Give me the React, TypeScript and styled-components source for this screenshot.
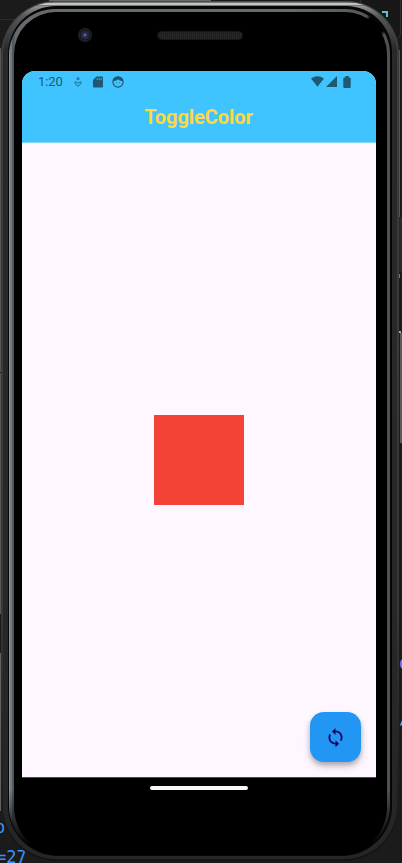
import React from "react";
import styled, { createGlobalStyle } from "styled-components";

const GlobalStyle = createGlobalStyle`
  * { box-sizing: border-box; }
  body { margin: 0; background: #1b1b1b; overflow: hidden; }
`;

const Desktop = styled.div`
  position: relative;
  width: 402px;
  height: 863px;
  padding: 1px 3px 2px 1px;
  overflow: hidden;
  background: #1b1b1b;
  font-family: Roboto, sans-serif;
`;

const Sliver = styled.i<{ $x: number; $y: number; $w: number; $h: number; $c: string }>`
  position: absolute;
  left: ${(p) => p.$x}px;
  top: ${(p) => p.$y}px;
  width: ${(p) => p.$w}px;
  height: ${(p) => p.$h}px;
  background: ${(p) => p.$c};
`;

const CodeText = styled.span<{ $x: number; $y: number; $c: string }>`
  position: absolute;
  left: ${(p) => p.$x}px;
  top: ${(p) => p.$y}px;
  font: 17px/20px "DejaVu Sans Mono", monospace;
  color: ${(p) => p.$c};
`;

const WindowCorner = styled.div`
  position: absolute;
  left: 360px;
  top: -10px;
  width: 41px;
  height: 49px;
  border: 1px solid #303030;
  border-radius: 6px;
  background: #171717;
`;

const Bracket = styled.div`
  position: absolute;
  left: 382px;
  top: 11px;
  width: 6px;
  height: 6px;
  border-top: 2px solid #69b9d6;
  border-right: 2px solid #69b9d6;
`;

const Shell = styled.div`
  position: relative;
  height: 860px;
  padding: 1px 2px 2px;
  border-radius: 55px 53px 55px 55px;
  background: linear-gradient(#4c4c4c 0, #3c3c3c 50px, #383838 70%, #141414 100%);
`;

const Metal = styled.div`
  height: 100%;
  padding: 4px 5px 3px;
  border-radius: 53px 51px 53px 53px;
  background:
    linear-gradient(#737676 0 1px, #c2c5c5 1px 3px, #777b7b 3px 4px, transparent 4px),
    linear-gradient(#aaa 0, #585858 14px, #292929 48px, #262626 100%);
`;

const Groove = styled.div`
  height: 100%;
  padding: 3px 2px 1px 1px;
  border-radius: 48px 46px 50px 50px;
  background: #050606;
`;

const Glass = styled.div`
  height: 100%;
  padding: 3px 3px 0 5px;
  border-radius: 46px 45px 49px 49px;
  background:
    radial-gradient(circle at 368px 15px, #000 9px, transparent 13px),
    linear-gradient(transparent 0, transparent 780px, #000 836px),
    linear-gradient(90deg, #929296 0 1px, #737980 1px 3px, #515763 3px 5px, #68686e 6px, #68686e 75%, #515155 100%);
`;

const Face = styled.div`
  display: flex;
  flex-direction: column;
  height: 100%;
  padding: 0 10px 0 8px;
  border-radius: 42px 42px 48px 48px;
  background: #000;
`;

const Forehead = styled.div`
  display: flex;
  align-items: center;
  flex: 0 0 59px;
  padding: 0 0 13px 56px;
`;

const Camera = styled.div`
  width: 14px;
  height: 14px;
  border-radius: 50%;
  background: radial-gradient(circle, #596080 0 1px, #252849 2px 4px, #17171b 4.5px 5px, #202123 6px);
`;

const Speaker = styled.div`
  width: 86px;
  height: 9px;
  margin-left: 65px;
  border: 1px solid #171818;
  border-radius: 5px;
  background: repeating-linear-gradient(90deg, #252727 0 1px, #1e2020 1px 2px);
`;

const Screen = styled.main`
  display: flex;
  flex-direction: column;
  flex: 0 0 707px;
  width: 354px;
  overflow: hidden;
  border-radius: 13px 13px 0 0;
  border-bottom: 1px solid #4b494c;
  background: #fef7ff;
`;

const AppBar = styled.header`
  flex: 0 0 72px;
  background: #40c4ff;
  border-bottom: 1px solid #86d7ff;
`;

const StatusBar = styled.div`
  display: flex;
  align-items: center;
  height: 21px;
  padding: 0 25px 0 16px;
  color: #1e5872;
`;

const Clock = styled.span`
  width: 35px;
  font-size: 13px;
  line-height: 20px;
  letter-spacing: -0.1px;
`;

const StatusIcon = styled.svg<{ $gap?: number }>`
  display: block;
  flex: none;
  margin-left: ${(p) => p.$gap ?? 0}px;
`;

const Spacer = styled.span`
  flex: 1;
`;

const Title = styled.h1`
  margin: 12px 1px 0 0;
  text-align: center;
  font-size: 20px;
  line-height: 26px;
  font-weight: 700;
  letter-spacing: -0.05px;
  color: #ffd740;
`;

const Body = styled.section`
  display: flex;
  flex-direction: column;
  align-items: center;
  flex: 1;
  padding: 272px 15px 15px 14px;
`;

const ColorBox = styled.div`
  width: 90px;
  height: 90px;
  background: #f44336;
`;

const ToggleButton = styled.button`
  display: flex;
  align-items: center;
  justify-content: center;
  align-self: flex-end;
  width: 51px;
  height: 50px;
  margin-top: auto;
  padding: 0;
  border: 0;
  border-radius: 14px;
  background: #2196f3;
  color: #21005d;
  box-shadow: 0 3px 5px rgba(0, 0, 0, 0.24), 0 5px 9px rgba(0, 0, 0, 0.12);
`;

const HomeBar = styled.div`
  align-self: center;
  width: 98px;
  height: 4px;
  margin: 8px 1px 0 0;
  border-radius: 2px;
  background: #f7f7f7;
`;

export default function App() {
  const [red, setRed] = React.useState(true);
  return (
    <>
      <GlobalStyle />
      <Desktop>
        <WindowCorner />
        <Bracket />
        <Sliver $x={0} $y={19} $w={30} $h={1} $c="#2c2c2c" />
        <Sliver $x={49} $y={0} $w={162} $h={1} $c="#686865" />
        <Sliver $x={0} $y={48} $w={1} $h={566} $c="#555" />
        <Sliver $x={0} $y={372} $w={1} $h={1} $c="#111" />
        <Sliver $x={0} $y={653} $w={1} $h={158} $c="#606060" />
        <Sliver $x={399} $y={50} $w={1} $h={167} $c="#555" />
        <Sliver $x={399} $y={217} $w={3} $h={55} $c="#292929" />
        <Sliver $x={399} $y={274} $w={1} $h={4} $c="#777" />
        <Sliver $x={399} $y={331} $w={2} $h={2} $c="#aaa" />
        <Sliver $x={400} $y={333} $w={2} $h={110} $c="#5b5b5b" />
        <CodeText $x={-5} $y={817} $c="#3794ff">o</CodeText>
        <CodeText $x={-4} $y={847} $c="#3794ff">=27</CodeText>
        <CodeText $x={399} $y={653} $c="#a974e8">o</CodeText>
        <CodeText $x={399} $y={708} $c="#69b9e6">/</CodeText>
        <Shell>
          <Metal>
            <Groove>
              <Glass>
                <Face>
                  <Forehead>
                    <Camera />
                    <Speaker />
                  </Forehead>
                  <Screen>
                    <AppBar>
                      <StatusBar>
                        <Clock>1:20</Clock>
                        <StatusIcon $gap={1} width="8" height="10" viewBox="0 0 8 10" fill="none" stroke="currentColor" strokeWidth="0.9">
                          <circle cx="4" cy="1.7" r="1.1" />
                          <path d="M4 9.3.9 6.3Q.4 4.9 1.7 4.7 2.6 4.6 4 6.4 5.4 4.6 6.3 4.7 7.6 4.9 7.1 6.3Z" />
                        </StatusIcon>
                        <StatusIcon $gap={11} width="10" height="12" viewBox="0 0 10 12" fill="currentColor">
                          <path fillRule="evenodd" d="M3.5.5H9q1 0 1 1v9q0 1-1 1H1q-1 0-1-1V4ZM3.8 2v2h.8V2Zm2 0v2h.8V2Zm2 0v2h.8V2Z" />
                        </StatusIcon>
                        <StatusIcon $gap={9} width="12" height="12" viewBox="0 0 12 12">
                          <circle cx="6" cy="6" r="5.1" fill="none" stroke="currentColor" strokeWidth="1.2" />
                          <path d="M1 5C1 2 3.3.7 6 .7S11 2 11 5C8.5 5 7.2 4.3 6 3.2 5 4.4 3.5 5 1 5Z" fill="currentColor" />
                          <path d="M4 6.8h1M7 6.8h1" stroke="currentColor" strokeWidth="0.7" />
                        </StatusIcon>
                        <Spacer />
                        <StatusIcon width="13" height="11" viewBox="0 0 13 11" fill="currentColor">
                          <path d="M0 2.6Q6.5-2 13 2.6L6.5 10.7Z" />
                        </StatusIcon>
                        <StatusIcon $gap={2} width="11" height="11" viewBox="0 0 11 11" fill="currentColor">
                          <path d="M0 11 11 0v11Z" />
                        </StatusIcon>
                        <StatusIcon $gap={6} width="8" height="12" viewBox="0 0 8 12" fill="currentColor">
                          <path d="M2.3 0h3.4v1.4h1q1 0 1 1V11q0 1-1 1H1.3q-1 0-1-1V2.4q0-1 1-1h1Z" />
                        </StatusIcon>
                      </StatusBar>
                      <Title>ToggleColor</Title>
                    </AppBar>
                    <Body>
                      <ColorBox style={{ backgroundColor: red ? "#f44336" : "#2196f3" }} />
                      <ToggleButton aria-label="Toggle color" onClick={() => setRed(!red)}>
                        <svg width="21" height="21" viewBox="0 0 24 24" fill="currentColor">
                          <path d="M12 4V1L8 5l4 4V6c3.31 0 6 2.69 6 6 0 1.01-.25 1.97-.7 2.8l1.46 1.46A7.93 7.93 0 0 0 20 12c0-4.42-3.58-8-8-8zm0 14c-3.31 0-6-2.69-6-6 0-1.01.25-1.97.7-2.8L5.24 7.74A7.93 7.93 0 0 0 4 12c0 4.42 3.58 8 8 8v3l4-4-4-4v3z" />
                        </svg>
                      </ToggleButton>
                    </Body>
                  </Screen>
                  <HomeBar />
                </Face>
              </Glass>
            </Groove>
          </Metal>
        </Shell>
      </Desktop>
    </>
  );
}
